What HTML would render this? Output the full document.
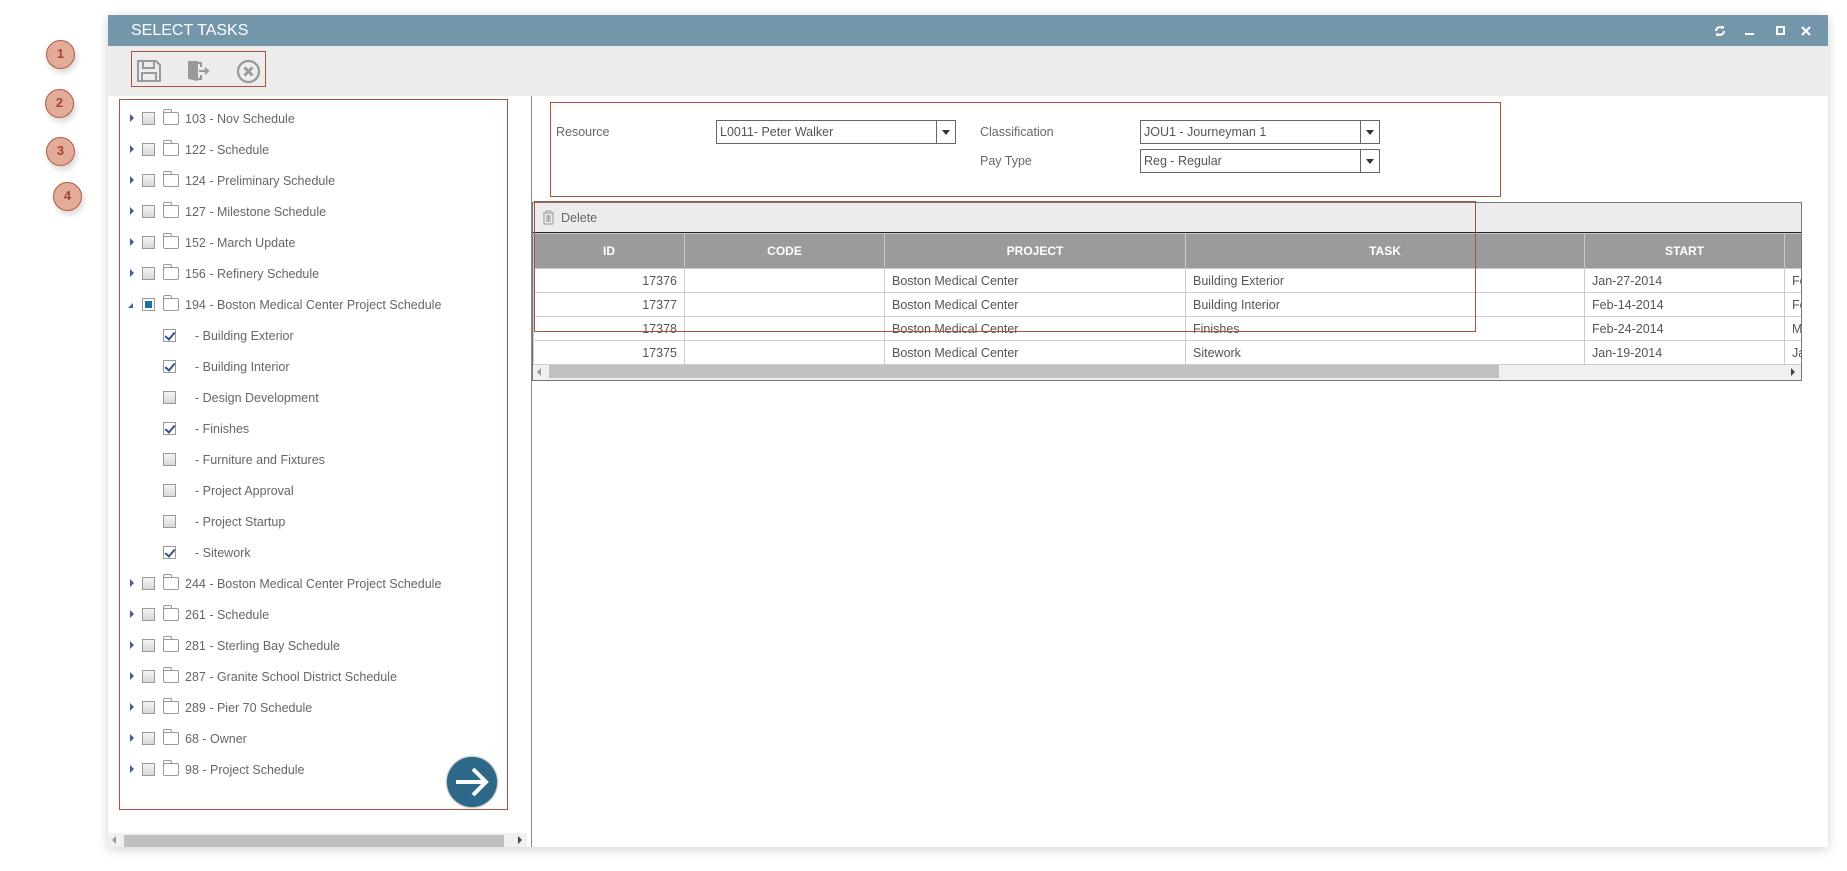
<!DOCTYPE html>
<html><head><meta charset="utf-8"><style>
*{box-sizing:border-box;margin:0;padding:0}
body{width:1847px;height:871px;background:#fff;position:relative;overflow:hidden;font-family:"Liberation Sans",sans-serif;font-size:12.5px;color:#666}
.abs{position:absolute}
.win{left:108px;top:15px;width:1720px;height:832px;background:#fff;box-shadow:0 2px 10px rgba(0,0,0,.18)}
.title{left:0;top:0;width:1720px;height:31px;background:#7396ab;color:#fff;font-size:16px;line-height:31px;padding-left:23px}
.tb{left:0;top:31px;width:1720px;height:50px;background:#ececec}
.circ{width:29px;height:29px;border-radius:50%;background:#e2ab9a;border:1.5px solid #b35c40;color:#a3472c;font-size:13px;font-weight:bold;text-align:center;line-height:26px;box-shadow:2px 4px 6px rgba(0,0,0,.15)}
.row{position:absolute;left:0;height:20px;line-height:20px;white-space:nowrap}
.arr{position:absolute;left:10px;top:5px;width:0;height:0;border-top:4px solid transparent;border-bottom:4px solid transparent;border-left:4px solid #4a5a9a}
.cb{position:absolute;top:3px;width:13px;height:13px;border:1px solid #999;background:linear-gradient(#f4f4f4,#d8d8d8)}
.cb.on{background:#fff}
.cb.on:after{content:"";position:absolute;left:3px;top:0px;width:4px;height:8px;border:solid #3a4f8a;border-width:0 2px 2px 0;transform:rotate(40deg)}
.fold{position:absolute;left:43px;top:3px;width:16px;height:13px;border:1px solid #999;border-radius:2px}
.fold:before{content:"";position:absolute;left:-1px;top:-4px;width:7px;height:3px;border:1px solid #999;border-bottom:none;border-radius:2px 2px 0 0}
.sel{position:absolute;height:24px;border:1px solid #666;background:#fff;line-height:22px;padding-left:3px;color:#555}
.sel i{position:absolute;right:0;top:0;width:19px;height:22px;border-left:1px solid #666}
.sel i:after{content:"";position:absolute;left:5px;top:9px;border-left:4px solid transparent;border-right:4px solid transparent;border-top:5px solid #333}
table{border-collapse:collapse;table-layout:fixed}
td,th{height:24px;border:1px solid #ccc;padding:0 7px;white-space:nowrap;overflow:hidden;color:#555;font-weight:normal;background:#fff}
th{height:35px;background:#9b9b9b;color:#fff;border-color:#c8c8c8;font-weight:bold;font-size:12px}
</style></head><body>
<div class="abs circ" style="left:46px;top:40px">1</div>
<div class="abs circ" style="left:45px;top:89px">2</div>
<div class="abs circ" style="left:46px;top:137px">3</div>
<div class="abs circ" style="left:53px;top:182px">4</div>

<div class="abs win">
<div class="abs title">SELECT TASKS
<svg class="abs" style="right:102px;top:10px" width="12" height="12" viewBox="0 0 12 12"><path d="M2 6a4 4 0 0 1 7-2.5M10 6a4 4 0 0 1-7 2.5" fill="none" stroke="#fff" stroke-width="2"/><path d="M7 1l3 0 0 3zM5 11l-3 0 0-3z" fill="#fff"/></svg>
<span class="abs" style="right:74px;top:18px;width:9px;height:2px;background:#fff"></span>
<span class="abs" style="right:43px;top:11px;width:9px;height:9px;border:2px solid #fff"></span>
<svg class="abs" style="right:17px;top:11px" width="10" height="10"><path d="M1 1l8 8M9 1l-8 8" stroke="#fff" stroke-width="2.2"/></svg>
</div>
<div class="abs tb"></div>
<div class="abs" style="left:23px;top:36px;width:135px;height:36px;border:1px solid #a9543a"></div>
<svg class="abs" style="left:28px;top:44px" width="26" height="24" viewBox="0 0 26 24"><path d="M2 2h18l4 4v16H2z M7 2v7h11V2 M6 22v-8h14v8" fill="none" stroke="#999" stroke-width="2"/></svg>
<svg class="abs" style="left:78px;top:44px" width="26" height="24" viewBox="0 0 26 24"><path d="M2 2h10v20l-10 -2z" fill="#999"/><path d="M12 4h3v4M15 16v4h-3M13 12h9M19 9l3 3-3 3" fill="none" stroke="#999" stroke-width="2"/></svg>
<svg class="abs" style="left:128px;top:44px" width="25" height="25" viewBox="0 0 25 25"><circle cx="12.5" cy="12.5" r="10.5" fill="none" stroke="#999" stroke-width="2.2"/><path d="M8.5 8.5l8 8M16.5 8.5l-8 8" stroke="#999" stroke-width="2.8"/></svg>

<div class="abs" style="left:11px;top:84px;width:389px;height:711px;border:1px solid #a9543a">
<div id="tree" style="position:absolute;left:0;top:0;width:380px"></div>
<div class="abs" style="left:327px;top:657px;width:50px;height:50px;border-radius:50%;background:#2e6889;box-shadow:0 0 2px #555"><svg width="50" height="50"><path d="M9 25h29M26 12l13 13-13 13" fill="none" stroke="#fff" stroke-width="4"/></svg></div>
</div>
<div class="abs" style="left:0;top:818px;width:419px;height:14px;background:#f0f0f0"><div class="abs" style="left:16px;top:2px;width:380px;height:12px;background:#c0c0c0"></div><span class="abs" style="left:4px;top:3px;border-top:4px solid transparent;border-bottom:4px solid transparent;border-right:4px solid #999"></span><span class="abs" style="left:410px;top:3px;border-top:4px solid transparent;border-bottom:4px solid transparent;border-left:4px solid #444"></span></div>
<div class="abs" style="left:423px;top:81px;width:1px;height:751px;background:#8a8a8a"></div>

<div class="abs" style="left:442px;top:87px;width:951px;height:95px;border:1px solid #a9543a"></div>
<div class="abs" style="left:448px;top:110px">Resource</div>
<div class="sel" style="left:608px;top:105px;width:240px">L0011- Peter Walker<i></i></div>
<div class="abs" style="left:872px;top:110px">Classification</div>
<div class="sel" style="left:1032px;top:105px;width:240px">JOU1 - Journeyman 1<i></i></div>
<div class="abs" style="left:872px;top:139px">Pay Type</div>
<div class="sel" style="left:1032px;top:134px;width:240px">Reg - Regular<i></i></div>

<div class="abs" style="left:424px;top:187px;width:1270px;height:179px;border:1px solid #777;background:#f0f0f0;overflow:hidden">
<div style="height:30px;background:#ececec;border-bottom:1px solid #222;line-height:30px;padding-left:28px;position:relative">Delete
<svg class="abs" style="left:9px;top:7px" width="13" height="15" viewBox="0 0 13 15"><path d="M1 3h11M4 3V1h5v2M2 3v11h9V3M5 5v7M6.5 5v7M8 5v7" fill="none" stroke="#999" stroke-width="1"/></svg></div>
<table style="width:1340px"><colgroup><col style="width:151px"><col style="width:200px"><col style="width:301px"><col style="width:399px"><col style="width:200px"><col style="width:89px"></colgroup>
<tr><th>ID</th><th>CODE</th><th>PROJECT</th><th>TASK</th><th>START</th><th></th></tr>
<tr><td style="text-align:right">17376</td><td></td><td>Boston Medical Center</td><td>Building Exterior</td><td>Jan-27-2014</td><td>Feb</td></tr>
<tr><td style="text-align:right">17377</td><td></td><td>Boston Medical Center</td><td>Building Interior</td><td>Feb-14-2014</td><td>Feb</td></tr>
<tr><td style="text-align:right">17378</td><td></td><td>Boston Medical Center</td><td>Finishes</td><td>Feb-24-2014</td><td>Mar</td></tr>
<tr><td style="text-align:right">17375</td><td></td><td>Boston Medical Center</td><td>Sitework</td><td>Jan-19-2014</td><td>Jan</td></tr>
</table>
<div class="abs" style="left:16px;top:162px;width:950px;height:13px;background:#c0c0c0"></div>
<span class="abs" style="left:4px;top:165px;border-top:4px solid transparent;border-bottom:4px solid transparent;border-right:4px solid #999"></span>
<span class="abs" style="left:1258px;top:165px;border-top:4px solid transparent;border-bottom:4px solid transparent;border-left:4px solid #444"></span>
</div>
<div class="abs" style="left:426px;top:186px;width:942px;height:131px;border:1px solid #a9543a"></div>
</div>

<script>
var items=[["103 - Nov Schedule",0],["122 - Schedule",0],["124 - Preliminary Schedule",0],["127 - Milestone Schedule",0],["152 - March Update",0],["156 - Refinery Schedule",0],["194 - Boston Medical Center Project Schedule",2],
["- Building Exterior",1,1],["- Building Interior",1,1],["- Design Development",1,0],["- Finishes",1,1],["- Furniture and Fixtures",1,0],["- Project Approval",1,0],["- Project Startup",1,0],["- Sitework",1,1],
["244 - Boston Medical Center Project Schedule",0],["261 - Schedule",0],["281 - Sterling Bay Schedule",0],["287 - Granite School District Schedule",0],["289 - Pier 70 Schedule",0],["68 - Owner",0],["98 - Project Schedule",0]];
var h="";items.forEach(function(it,i){var y=9+i*31;
if(it[1]==1){h+='<div class="row" style="top:'+y+'px"><span class="cb'+(it[2]?' on':'')+'" style="left:43px"></span><span style="position:absolute;left:75px">'+it[0]+'</span></div>';}
else{h+='<div class="row" style="top:'+y+'px">'+(it[1]==2?'<span style="position:absolute;left:8px;top:8px;border-left:5px solid transparent;border-bottom:5px solid #4a5a9a"></span><span class="cb" style="left:22px;background:#fff"><span style="position:absolute;left:2px;top:2px;width:7px;height:7px;background:#1f6fa8"></span></span>':'<span class="arr"></span><span class="cb" style="left:22px"></span>')+'<span class="fold"></span><span style="position:absolute;left:65px">'+it[0]+'</span></div>';}
});document.getElementById("tree").innerHTML=h;
</script>
</body></html>
